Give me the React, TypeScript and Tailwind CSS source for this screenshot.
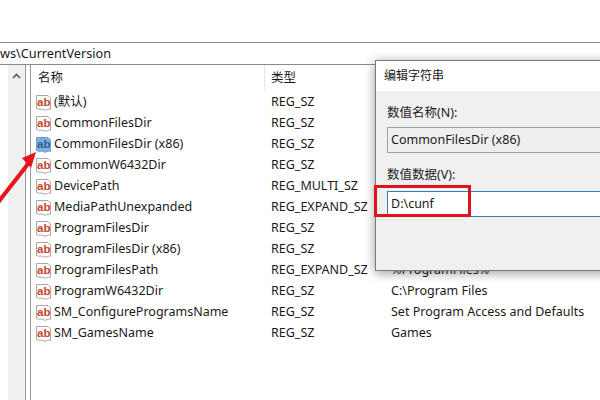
const rows: [string, string, string?][] = [
  ["(默认)", "REG_SZ"],
  ["CommonFilesDir", "REG_SZ"],
  ["CommonFilesDir (x86)", "REG_SZ"],
  ["CommonW6432Dir", "REG_SZ"],
  ["DevicePath", "REG_MULTI_SZ"],
  ["MediaPathUnexpanded", "REG_EXPAND_SZ"],
  ["ProgramFilesDir", "REG_SZ"],
  ["ProgramFilesDir (x86)", "REG_SZ"],
  ["ProgramFilesPath", "REG_EXPAND_SZ", "%ProgramFiles%"],
  ["ProgramW6432Dir", "REG_SZ", "C:\\Program Files"],
  ["SM_ConfigureProgramsName", "REG_SZ", "Set Program Access and Defaults"],
  ["SM_GamesName", "REG_SZ", "Games"],
];

function AbIcon({ selected }: { selected?: boolean }) {
  return (
    <svg width="17" height="18" viewBox="0 0 17 18" className="shrink-0">
      <path
        d="M1.5 1.5H13L15.5 4V15.5C13 14 11 17.5 8 15.5C6 14.5 4 16 1.5 14.5Z"
        fill={selected ? "#7fb0e0" : "#ffffff"}
        stroke={selected ? "#6a9ccf" : "#a8a8a8"}
      />
      <text
        x="2"
        y="11.5"
        fontSize="11.5"
        fontWeight="700"
        fill={selected ? "#2f5f96" : "#c8452c"}
        fontFamily="'Liberation Sans', sans-serif"
      >
        ab
      </text>
    </svg>
  );
}

export default function App() {
  return (
    <div className="relative w-[600px] h-[400px] overflow-hidden bg-white text-[12.5px] text-[#1a1a1a] font-['Noto_Sans','Noto_Sans_CJK_SC',sans-serif]">
      <div className="h-[42px]" />
      <div className="h-[23px] border-y border-[#8a8a8a] flex items-center whitespace-nowrap text-[12.7px] leading-none">
        ws\CurrentVersion
      </div>
      <div className="flex h-[335px]">
        <div className="w-[8px]" />
        <div className="w-[17px] bg-[#f0f0f0] flex justify-center pt-[8px]">
          <svg width="9" height="6" viewBox="0 0 9 6">
            <path d="M1 5L4.5 1.5L8 5" fill="none" stroke="#555" strokeWidth="1.6" />
          </svg>
        </div>
        <div className="w-[6px] border-x border-[#9a9a9a]" />
        <div className="flex-1 min-w-0">
          <div className="h-[26px] flex items-center">
            <div className="w-[234px] h-full pl-[7px] flex items-center border-r border-[#e5e5e5]">名称</div>
            <div className="pl-[6px]">类型</div>
          </div>
          <div className="pt-[1px]">
            {rows.map(([name, type, data], i) => (
              <div key={name} className="h-[21px] flex items-center whitespace-nowrap">
                <div className="w-[234px] pl-[4px] flex items-center gap-[2px]">
                  <AbIcon selected={i === 2} />
                  <span>{name}</span>
                </div>
                <div className="w-[126px] pl-[6px]">{type}</div>
                <div>{data}</div>
              </div>
            ))}
          </div>
        </div>
      </div>

      <svg width="40" height="60" viewBox="0 0 40 60" className="absolute left-0 top-[150px]">
        <path d="M-4 55L28 14" stroke="#e8141c" strokeWidth="4" fill="none" />
        <path d="M36 2L22 8L31 18Z" fill="#e8141c" />
      </svg>

      <div className="absolute left-[375px] top-[60px] w-[240px] h-[211px] border border-[#7a7a7a] bg-[#f0f0f0] shadow-[0_2px_10px_rgba(0,0,0,0.4)]">
        <div className="h-[30px] bg-white flex items-center pl-[8px] text-[12px]">编辑字符串</div>
        <div className="pl-[11px] pt-[13px]">
          <div className="h-[18px] flex items-center">数值名称(N):</div>
          <div className="mt-[5px] h-[26px] border border-[#a0a0a0] bg-[#efefef] flex items-center pl-[3px]">
            CommonFilesDir (x86)
          </div>
          <div className="mt-[13px] h-[18px] flex items-center">数值数据(V):</div>
          <div className="mt-[7px] h-[26px] border border-[#2f7fbf] bg-white flex items-center pl-[3px]">
            D:\cunf
          </div>
        </div>
      </div>
      <div className="absolute left-[374px] top-[185px] w-[97px] h-[32px] border-[3px] border-[#e0141c]" />
    </div>
  );
}
